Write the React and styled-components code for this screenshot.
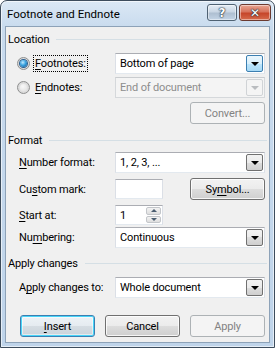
import React from "react";
import styled, { createGlobalStyle, css } from "styled-components";

const FONT = `"Roboto", "Liberation Sans", sans-serif`;
const FS = "11px";
const LS = "-0.15px";

const Global = createGlobalStyle`
  html, body { margin: 0; padding: 0; background: #fff; }
  body { font-family: ${FONT}; font-size: ${FS}; letter-spacing: ${LS}; color: #000; }
  * { box-sizing: border-box; }
`;

const Window = styled.div`
  width: 275px;
  height: 348px;
  display: flex;
  flex-direction: column;
  border: 1px solid #3d4c5c;
  border-radius: 7px 7px 0 0;
  background: linear-gradient(180deg, #dbe8f5 0px, #c9dbee 26px, #bfd4ea 100%);
  box-shadow: inset 0 0 0 1px rgba(255,255,255,0.6);
  overflow: hidden;
`;

const TitleBar = styled.div`
  height: 25px;
  flex: none;
  display: flex;
  align-items: flex-start;
  gap: 2px;
  padding: 0 3px 0 6px;
`;

const Title = styled.div`
  flex: 1;
  font-size: 11.5px;
  letter-spacing: 0;
  line-height: 26px;
  color: #000;
`;

const CaptionButton = styled.div`
  width: ${(p) => (p.$close ? 32 : 30)}px;
  height: 17px;
  margin-top: 3px;
  border: 1px solid ${(p) => (p.$close ? "#6b3a30" : "#4f6273")};
  border-radius: 3px;
  display: flex;
  align-items: center;
  justify-content: center;
  font-family: "DejaVu Sans", sans-serif;
  font-weight: bold;
  font-size: 12px;
  color: #fff;
  text-shadow: 0 0 1px #203040, 0 0 1px #203040, 0 0 2px #203040;
  box-shadow: inset 0 0 0 1px rgba(255, 255, 255, 0.45);
  ${(p) =>
    p.$close
      ? css`
          background: linear-gradient(180deg, #e8a592 0%, #d7735c 45%, #c6462a 55%, #d66b4c 100%);
        `
      : css`
          background: linear-gradient(180deg, #e6eef6 0%, #c9d6e4 45%, #aebfd1 55%, #c3d4e6 100%);
        `}
`;

const Client = styled.div`
  flex: 1;
  margin: 0 4px 4px 4px;
  background: #f0f0f0;
  border: 1px solid #8da2b8;
  padding: 4px 4px 0 2px;
  display: flex;
  flex-direction: column;
`;

const SectionHeader = styled.div`
  height: 16px;
  display: flex;
  align-items: center;
  gap: 7px;
  margin-top: ${(p) => p.$mt || 0}px;
  margin-right: -2px;
  font-size: ${FS};
  &::after {
    content: "";
    flex: 1;
    height: 1px;
    background: #d5dfe5;
  }
`;

const Row = styled.div`
  display: grid;
  grid-template-columns: ${(p) => (p.$radio ? "9px 13px 85px" : "10px 97px")} 1fr;
  align-items: center;
  height: ${(p) => p.$h || 21}px;
  margin-top: ${(p) => p.$mt || 0}px;
  & > :first-child { grid-column: 2; }
`;

const Radio = styled.span`
  width: 13px;
  height: 13px;
  border-radius: 50%;
  border: 1px solid ${(p) => (p.$disabled ? "#b8bdc2" : "#8e8f8f")};
  background: radial-gradient(circle at 50% 50%, #f4f4f4 0%, #dcdcdc 60%, #cfcfcf 100%);
  display: flex;
  align-items: center;
  justify-content: center;
  &::after {
    content: "";
    width: 7px;
    height: 7px;
    border-radius: 50%;
    ${(p) =>
      p.$checked
        ? css`
            background: radial-gradient(circle at 40% 35%, #c5eaff 0%, #3ba4e0 45%, #0d4f8e 100%);
            box-shadow: 0 0 0 1px #2a5f91;
          `
        : css`
            background: radial-gradient(circle at 40% 35%, #f8f8f8 0%, #e0e0e0 100%);
          `}
  }
`;

const Label = styled.span`
  font-size: ${FS};
  white-space: nowrap;
  line-height: 15px;
  justify-self: start;
  margin-left: ${(p) => p.$ml || 0}px;
  padding: 0 1px;
  color: ${(p) => (p.$disabled ? "#8d8d8d" : "#000")};
  ${(p) =>
    p.$focus &&
    css`
      outline: 1px dotted #000;
      outline-offset: 0px;
    `}
  u { text-decoration: underline; text-underline-offset: 2px; }
`;

const Combo = styled.div`
  height: ${(p) => p.$h || 21}px;
  display: flex;
  align-items: stretch;
  border: 1px solid ${(p) => (p.$disabled ? "#c9cccf" : "#abadb3")};
  border-left-color: ${(p) => (p.$disabled ? "#d5d8db" : "#dbdfe6")};
  border-right-color: ${(p) => (p.$disabled ? "#d5d8db" : "#dbdfe6")};
  border-bottom-color: ${(p) => (p.$disabled ? "#d5d8db" : "#e3e9ef")};
  background: ${(p) => (p.$disabled ? "#f4f4f4" : "#fff")};
  padding: 1px;
`;

const ComboText = styled.div`
  flex: 1;
  font-size: ${FS};
  line-height: 17px;
  padding-left: 3px;
  color: ${(p) => (p.$disabled ? "#8d8d8d" : "#000")};
  white-space: nowrap;
  overflow: hidden;
`;

const ArrowButton = styled.div`
  width: 17px;
  display: flex;
  align-items: center;
  justify-content: center;
  border: 1px solid ${(p) => (p.$hot ? "#3c7fb1" : p.$disabled ? "#d0d3d6" : "#707070")};
  border-radius: 2px;
  ${(p) =>
    p.$hot
      ? css`
          background: linear-gradient(180deg, #eaf6fd 0%, #d9f0fc 50%, #bee6fd 50%, #a7d9f5 100%);
        `
      : p.$disabled
      ? css`
          background: #f4f4f4;
        `
      : css`
          background: linear-gradient(180deg, #f2f2f2 0%, #ebebeb 50%, #dddddd 50%, #cfcfcf 100%);
        `}
`;

const Tri = styled.span`
  width: 0;
  height: 0;
  border-left: 4px solid transparent;
  border-right: 4px solid transparent;
  border-top: 4px solid ${(p) => (p.$disabled ? "#b9bcbf" : "#000")};
  margin-top: 1px;
`;

const ButtonRow = styled.div`
  display: flex;
  justify-content: flex-end;
  gap: 10px;
  margin-top: ${(p) => p.$mt || 0}px;
`;

const Button = styled.div`
  width: 75px;
  height: 22px;
  display: flex;
  align-items: center;
  justify-content: center;
  font-size: ${FS};
  border-radius: 3px;
  border: 1px solid #707070;
  background: linear-gradient(180deg, #f2f2f2 0%, #ebebeb 50%, #dddddd 50%, #cfcfcf 100%);
  box-shadow: inset 0 0 0 1px rgba(255, 255, 255, 0.8);
  color: #000;
  u { text-decoration: underline; text-underline-offset: 2px; }
  ${(p) =>
    p.$default &&
    css`
      border-color: #3c7fb1;
      box-shadow: inset 0 0 0 1px #48d5f9, inset 0 0 0 2px rgba(255,255,255,0.5);
      background: linear-gradient(180deg, #eef3f7 0%, #e5ebf0 50%, #d6dde3 50%, #cad3da 100%);
    `}
  ${(p) =>
    p.$disabled &&
    css`
      border-color: #adb2b5;
      background: #f4f4f4;
      box-shadow: none;
      color: #838383;
    `}
`;

const SmallBox = styled.div`
  width: 48px;
  height: ${(p) => p.$h || 20}px;
  display: flex;
  align-items: center;
  background: #fff;
  border: 1px solid #abadb3;
  border-left-color: #dbdfe6;
  border-right-color: #dbdfe6;
  border-bottom-color: #e3e9ef;
  padding: 1px;
`;

const SpinText = styled.div`
  flex: 1;
  font-size: ${FS};
  padding-left: 3px;
`;

const Spin = styled.div`
  width: 15px;
  height: 100%;
  display: flex;
  flex-direction: column;
  gap: 1px;
`;

const SpinHalf = styled.div`
  flex: 1;
  border: 1px solid #c3c6ca;
  border-radius: 2px;
  background: linear-gradient(180deg, #f3f3f3, #dedede);
  display: flex;
  align-items: center;
  justify-content: center;
  &::after {
    content: "";
    border-left: 3px solid transparent;
    border-right: 3px solid transparent;
    ${(p) =>
      p.$up
        ? css`border-bottom: 3px solid #4a5d70;`
        : css`border-top: 3px solid #4a5d70;`}
  }
`;

const MarkRow = styled.div`
  display: grid;
  grid-template-columns: 10px 97px 48px 1fr;
  align-items: center;
  height: 22px;
  margin-top: ${(p) => p.$mt || 0}px;
  & > :first-child { grid-column: 2; }
  & > :last-child { justify-self: end; }
`;

function ComboBox({ value, hot, disabled }) {
  return (
    <Combo $disabled={disabled}>
      <ComboText $disabled={disabled}>{value}</ComboText>
      <ArrowButton $hot={hot} $disabled={disabled}>
        <Tri $disabled={disabled} />
      </ArrowButton>
    </Combo>
  );
}

export default function App() {
  return (
    <>
      <Global />
      <Window>
        <TitleBar>
          <Title>Footnote and Endnote</Title>
          <CaptionButton>?</CaptionButton>
          <CaptionButton $close>✕</CaptionButton>
        </TitleBar>
        <Client>
          <SectionHeader>Location</SectionHeader>

          <Row $radio $mt={6}>
            <Radio $checked />
            <Label $focus $ml={4}>
              <u>F</u>ootnotes:
            </Label>
            <ComboBox value="Bottom of page" hot />
          </Row>
          <Row $radio $mt={3}>
            <Radio />
            <Label $ml={4}>
              <u>E</u>ndnotes:
            </Label>
            <ComboBox value="End of document" disabled />
          </Row>
          <ButtonRow $mt={4}>
            <Button $disabled>Convert...</Button>
          </ButtonRow>

          <SectionHeader $mt={8}>Format</SectionHeader>
          <Row $mt={4}>
            <Label>
              <u>N</u>umber format:
            </Label>
            <ComboBox value="1, 2, 3, ..." />
          </Row>
          <MarkRow $mt={5}>
            <Label>
              Cu<u>s</u>tom mark:
            </Label>
            <SmallBox />
            <Button>
              Sy<u>m</u>bol...
            </Button>
          </MarkRow>
          <Row $mt={5} $h={20}>
            <Label>
              <u>S</u>tart at:
            </Label>
            <SmallBox>
              <SpinText>1</SpinText>
              <Spin>
                <SpinHalf $up />
                <SpinHalf />
              </Spin>
            </SmallBox>
          </Row>
          <Row $mt={2}>
            <Label>
              Nu<u>m</u>bering:
            </Label>
            <ComboBox value="Continuous" />
          </Row>

          <SectionHeader $mt={7}>Apply changes</SectionHeader>
          <Row $mt={6}>
            <Label>
              A<u>p</u>ply changes to:
            </Label>
            <ComboBox value="Whole document" />
          </Row>

          <ButtonRow $mt={17}>
            <Button $default>
              <u>I</u>nsert
            </Button>
            <Button>Cancel</Button>
            <Button $disabled>Apply</Button>
          </ButtonRow>
        </Client>
      </Window>
    </>
  );
}
